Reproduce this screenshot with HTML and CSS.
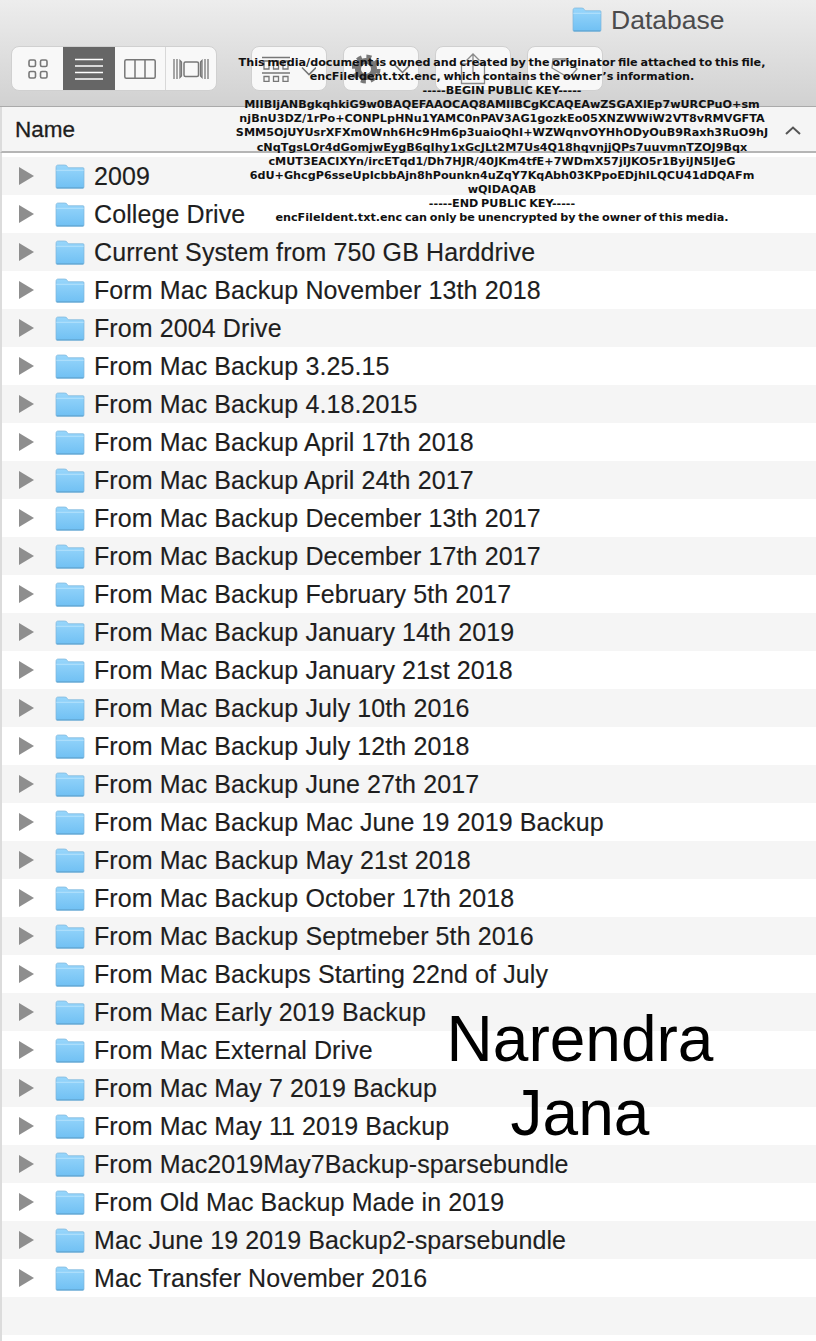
FILE: index.html
```html
<!DOCTYPE html>
<html lang="en">
    <head>
        <meta charset="utf-8">
        <title>Database</title>
        <link rel="stylesheet" href="styles.css">
    </head>
    <body>

        <!-- shared folder icon -->
        <svg class="defs" width="0" height="0">
            <defs>
                <linearGradient id="folderFill" x1="0" y1="0" x2="0" y2="1">
                    <stop offset="0" stop-color="#98d6fb"/>
                    <stop offset="1" stop-color="#70c0f3"/>
                </linearGradient>
                <symbol id="folder" viewBox="0 0 30 25">
                    <path d="M1 3.500C1 1.800 1.800 1 3.200 1h6.600c1.200 0 1.800.5 2.500 1.400l1 1.300H28c.7 0 1 .4 1 1.100V23c0 .8-.4 1.200-1.200 1.200H2.200C1.400 24.200 1 23.800 1 23z" fill="url(#folderFill)" stroke="#7fb6da" stroke-width=".7"/>
                    <path d="M1.300 6.300h27.400" stroke="#b4e1fc" stroke-width="1" fill="none"/>
                    <path d="M1.500 23.900h27" stroke="#5a9fcc" stroke-width=".9" fill="none"/>
                </symbol>
            </defs>
        </svg>

        <div class="window">
            <header class="titlebar">
                <div class="titlebar__title">
                    <svg class="titlebar__folder"><use href="#folder"/></svg>
                    <span class="titlebar__name">Database</span>
                </div>
                <div class="toolbar">
                    <div class="views">
                        <button class="views__item views__item--first">
                            <svg width="20" height="20" viewBox="0 0 20 20" fill="none" stroke="#777" stroke-width="1.600">
                                <rect x="1" y="1" width="6.500" height="6.500" rx="1.500"/>
                                <rect x="12.500" y="1" width="6.500" height="6.500" rx="1.500"/>
                                <rect x="1" y="12.500" width="6.500" height="6.500" rx="1.500"/>
                                <rect x="12.500" y="12.500" width="6.500" height="6.500" rx="1.500"/>
                            </svg>
                        </button>
                        <button class="views__item views__item--active">
                            <svg width="28" height="22" viewBox="0 0 28 22" fill="none" stroke="#fff" stroke-width="1.400">
                                <path d="M0 1.500h28M0 8h28M0 14.500h28M0 21h28"/>
                            </svg>
                        </button>
                        <button class="views__item">
                            <svg width="32" height="20" viewBox="0 0 32 20" fill="none" stroke="#777" stroke-width="1.500">
                                <rect x=".8" y=".8" width="30.400" height="18.400" rx="1.500"/>
                                <path d="M11 1v18M21 1v18"/>
                            </svg>
                        </button>
                        <button class="views__item">
                            <svg width="36" height="22" viewBox="0 0 36 22" fill="none" stroke="#777" stroke-width="1.300">
                                <rect x="11" y="4" width="14.500" height="14.500" rx="1.500" stroke-width="1.500"/>
                                <path d="M1 1v20M4 1v20M7 2.500l1.500 1.500v14L7 19.500zM35 1v20M32 1v20M29 2.500L27.500 4v14l1.500 1.500z"/>
                            </svg>
                        </button>
                    </div>
                    <div class="tools">
                        <button class="tool">
                            <svg width="54" height="26" viewBox="0 0 54 26" fill="none" stroke="#777">
                                <path d="M0 1.500h28M0 17h28" stroke-width="1.300"/>
                                <path d="M2 5h5v8H2zM11.500 5h5v8h-5zM21 5h5v8h-5zM2 20.500h5v5H2zM11.500 20.500h5v5h-5zM21 20.500h5v5h-5z" stroke-width="1.300"/>
                                <path d="M40 11.500l7 7 7-7" stroke-width="1.600"/>
                            </svg>
                        </button>
                        <button class="tool">
                            <svg width="58" height="30" viewBox="0 0 58 30" fill="none" stroke="#777">
                                <circle cx="14" cy="15" r="8" stroke-width="6"/>
                                <circle cx="14" cy="15" r="12.500" stroke-width="4" stroke-dasharray="5 4.820"/>
                                <path d="M43 11l7.500 7.500L58 11" stroke-width="1.500"/>
                            </svg>
                        </button>
                        <button class="tool">
                            <svg width="26" height="32" viewBox="0 0 26 32" fill="none" stroke="#8a8a8a" stroke-width="1.300">
                                <path d="M8 11H1.500v19.500h23V11H18M13 21V1M6.500 7.500L13 1l6.500 6.500"/>
                            </svg>
                        </button>
                        <button class="tool">
                            <svg width="30" height="22" viewBox="0 0 30 22" fill="none" stroke="#8a8a8a" stroke-width="1.300">
                                <path d="M3 1h13l11 10-8 9L2 10z"/>
                                <circle cx="8" cy="6" r="1.500"/>
                            </svg>
                        </button>
                    </div>
                </div>
            </header>

            <div class="columns">
                <span class="columns__name">Name</span>
                <svg width="16" height="9" viewBox="0 0 16 9" fill="none" stroke="#555" stroke-width="2">
                    <path d="M1 8l7-6.500L15 8"/>
                </svg>
            </div>

            <ul class="files">
                <li class="file"><i class="file__arrow"></i><svg class="file__icon"><use href="#folder"/></svg>2009</li>
                <li class="file"><i class="file__arrow"></i><svg class="file__icon"><use href="#folder"/></svg>College Drive</li>
                <li class="file"><i class="file__arrow"></i><svg class="file__icon"><use href="#folder"/></svg>Current System from 750 GB Harddrive</li>
                <li class="file"><i class="file__arrow"></i><svg class="file__icon"><use href="#folder"/></svg>Form Mac Backup November 13th 2018</li>
                <li class="file"><i class="file__arrow"></i><svg class="file__icon"><use href="#folder"/></svg>From 2004 Drive</li>
                <li class="file"><i class="file__arrow"></i><svg class="file__icon"><use href="#folder"/></svg>From Mac Backup 3.25.15</li>
                <li class="file"><i class="file__arrow"></i><svg class="file__icon"><use href="#folder"/></svg>From Mac Backup 4.18.2015</li>
                <li class="file"><i class="file__arrow"></i><svg class="file__icon"><use href="#folder"/></svg>From Mac Backup April 17th 2018</li>
                <li class="file"><i class="file__arrow"></i><svg class="file__icon"><use href="#folder"/></svg>From Mac Backup April 24th 2017</li>
                <li class="file"><i class="file__arrow"></i><svg class="file__icon"><use href="#folder"/></svg>From Mac Backup December 13th 2017</li>
                <li class="file"><i class="file__arrow"></i><svg class="file__icon"><use href="#folder"/></svg>From Mac Backup December 17th 2017</li>
                <li class="file"><i class="file__arrow"></i><svg class="file__icon"><use href="#folder"/></svg>From Mac Backup February 5th 2017</li>
                <li class="file"><i class="file__arrow"></i><svg class="file__icon"><use href="#folder"/></svg>From Mac Backup January 14th 2019</li>
                <li class="file"><i class="file__arrow"></i><svg class="file__icon"><use href="#folder"/></svg>From Mac Backup January 21st 2018</li>
                <li class="file"><i class="file__arrow"></i><svg class="file__icon"><use href="#folder"/></svg>From Mac Backup July 10th 2016</li>
                <li class="file"><i class="file__arrow"></i><svg class="file__icon"><use href="#folder"/></svg>From Mac Backup July 12th 2018</li>
                <li class="file"><i class="file__arrow"></i><svg class="file__icon"><use href="#folder"/></svg>From Mac Backup June 27th 2017</li>
                <li class="file"><i class="file__arrow"></i><svg class="file__icon"><use href="#folder"/></svg>From Mac Backup Mac June 19 2019 Backup</li>
                <li class="file"><i class="file__arrow"></i><svg class="file__icon"><use href="#folder"/></svg>From Mac Backup May 21st 2018</li>
                <li class="file"><i class="file__arrow"></i><svg class="file__icon"><use href="#folder"/></svg>From Mac Backup October 17th 2018</li>
                <li class="file"><i class="file__arrow"></i><svg class="file__icon"><use href="#folder"/></svg>From Mac Backup Septmeber 5th 2016</li>
                <li class="file"><i class="file__arrow"></i><svg class="file__icon"><use href="#folder"/></svg>From Mac Backups Starting 22nd of July</li>
                <li class="file"><i class="file__arrow"></i><svg class="file__icon"><use href="#folder"/></svg>From Mac Early 2019 Backup</li>
                <li class="file"><i class="file__arrow"></i><svg class="file__icon"><use href="#folder"/></svg>From Mac External Drive</li>
                <li class="file"><i class="file__arrow"></i><svg class="file__icon"><use href="#folder"/></svg>From Mac May 7 2019 Backup</li>
                <li class="file"><i class="file__arrow"></i><svg class="file__icon"><use href="#folder"/></svg>From Mac May 11 2019 Backup</li>
                <li class="file"><i class="file__arrow"></i><svg class="file__icon"><use href="#folder"/></svg>From Mac2019May7Backup-sparsebundle</li>
                <li class="file"><i class="file__arrow"></i><svg class="file__icon"><use href="#folder"/></svg>From Old Mac Backup Made in 2019</li>
                <li class="file"><i class="file__arrow"></i><svg class="file__icon"><use href="#folder"/></svg>Mac June 19 2019 Backup2-sparsebundle</li>
                <li class="file"><i class="file__arrow"></i><svg class="file__icon"><use href="#folder"/></svg>Mac Transfer November 2016</li>
                <li class="file file--empty"></li>
            </ul>
        </div>

        <!-- watermarks lying over the window -->
        <div class="notice">
            <p>This media/document is owned and created by the originator file attached to this file,</p>
            <p>encFileIdent.txt.enc, which contains the owner’s information.</p>
            <p>-----BEGIN PUBLIC KEY-----</p>
            <p>MIIBIjANBgkqhkiG9w0BAQEFAAOCAQ8AMIIBCgKCAQEAwZSGAXlEp7wURCPuO+sm</p>
            <p>njBnU3DZ/1rPo+CONPLpHNu1YAMC0nPAV3AG1gozkEo05XNZWWiW2VT8vRMVGFTA</p>
            <p>SMM5OjUYUsrXFXm0Wnh6Hc9Hm6p3uaioQhI+WZWqnvOYHhODyOuB9Raxh3RuO9hJ</p>
            <p>cNqTgsLOr4dGomjwEygB6qIhy1xGcJLt2M7Us4Q18hqvnjjQPs7uuvmnTZOJ9Bqx</p>
            <p>cMUT3EACIXYn/ircETqd1/Dh7HJR/40JKm4tfE+7WDmX57jIJKO5r1ByiJN5lJeG</p>
            <p>6dU+GhcgP6sseUpIcbbAjn8hPounkn4uZqY7KqAbh03KPpoEDjhILQCU41dDQAFm</p>
            <p>wQIDAQAB</p>
            <p>-----END PUBLIC KEY-----</p>
            <p>encFileIdent.txt.enc can only be unencrypted by the owner of this media.</p>
        </div>

        <div class="owner">Narendra<br>Jana</div>

    </body>
</html>
```

FILE: styles.css
```css
* {
    box-sizing: border-box;
}

html, body {
    margin: 0;
    padding: 0;
}

body {
    position: relative;
    width: 816px;
    height: 1341px;
    overflow: hidden;
    background-color: #fff;
    font-family: "Liberation Sans", Arial, sans-serif;
    color: #1e1e1e;
}

.defs {
    position: absolute;
}

.window {
    display: flex;
    flex-direction: column;
    height: 100%;
}

.titlebar {
    height: 107px;
    padding: 7px 11px 0;
    background: linear-gradient(#ededed, #d1d1d1);
    border-bottom: 1px solid #aaa;
}

.titlebar__title {
    display: flex;
    align-items: center;
    gap: 9px;
    height: 25px;
    margin-left: 561px;
    font-size: 26.500px;
    color: #4b4b4d;
}

.titlebar__folder {
    width: 30px;
    height: 25px;
}

.titlebar__name {
    padding-top: 2px;
}

.toolbar {
    display: flex;
    gap: 34px;
    margin-top: 14px;
}

.views {
    display: flex;
    width: 206px;
    height: 45px;
    overflow: hidden;
    background-color: #f8f8f8;
    border: 1px solid #d0d0d0;
    border-radius: 8px;
}

.views__item {
    flex: 1;
    display: flex;
    align-items: center;
    justify-content: center;
    padding: 0;
    background: none;
    border: 0;
    border-left: 1px solid #d8d8d8;
}

.views__item--first {
    flex: 0 0 51px;
    border-left: 0;
}

.views__item--active {
    flex: 0 0 52px;
    background-color: #666;
    border-left: 0;
}

.views__item--active + .views__item {
    border-left: 0;
}

.tools {
    display: flex;
    gap: 16px;
}

.tool {
    display: flex;
    align-items: center;
    justify-content: center;
    width: 76px;
    height: 45px;
    padding: 0;
    background-color: #f8f8f8;
    border: 1px solid #d0d0d0;
    border-radius: 8px;
}

.columns {
    display: flex;
    align-items: center;
    justify-content: space-between;
    height: 46px;
    padding: 2px 15px 0 13px;
    background-color: #f5f5f5;
    border-left: 2px solid #dcdcdc;
    border-bottom: 2px solid #b5b5b5;
}

.columns__name {
    font-size: 22.500px;
    -webkit-text-stroke: .3px #1e1e1e;
}

.files {
    flex: 1;
    margin: 0;
    padding: 4px 0 0;
    list-style: none;
    border-left: 2px solid #dcdcdc;
}

.file {
    display: flex;
    align-items: center;
    height: 38px;
    padding-left: 17px;
    font-size: 25px;
    letter-spacing: .1px;
    white-space: nowrap;
    -webkit-text-stroke: .15px #1e1e1e;
}

.file:nth-child(odd) {
    background-color: #f5f5f5;
}

.file__arrow {
    width: 0;
    height: 0;
    border-top: 9px solid transparent;
    border-bottom: 9px solid transparent;
    border-left: 15px solid #8e8e8e;
}

.file__icon {
    width: 30px;
    height: 25px;
    margin: 0 9px 0 21px;
}

.notice {
    position: absolute;
    top: 56px;
    left: 222px;
    width: 560px;
    font-family: "DejaVu Sans", Verdana, sans-serif;
    font-size: 11.200px;
    font-weight: bold;
    line-height: 14.100px;
    word-spacing: -1.150px;
    text-align: center;
    color: #111;
}

.notice p {
    margin: 0;
    white-space: nowrap;
}

.owner {
    position: absolute;
    top: 1002px;
    left: 380px;
    width: 400px;
    font-size: 64px;
    line-height: 74px;
    text-align: center;
    color: #000;
}
```
